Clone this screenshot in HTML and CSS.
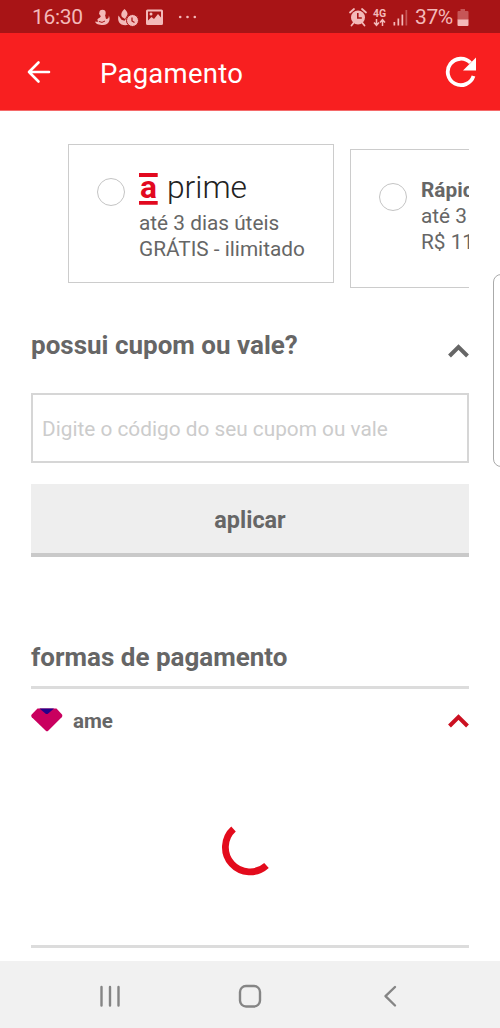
FILE: index.html
```html
<!DOCTYPE html>
<html lang="pt-BR">
<head>
<meta charset="utf-8">
<title>Pagamento</title>
<link rel="stylesheet" href="styles.css">
</head>
<body>
<div class="screen">
  <div class="status">
    <span class="time">16:30</span>
    <svg class="status-left" width="112" height="33" viewBox="90 0 112 33" fill="#f3b9b9">
      <circle cx="102.500" cy="12" r="3.200"/>
      <path d="M99 12.500l1.500-1.500 4.500 3 1 4c2 0 3-1 2.800-3.500 2 3.500.5 9.500-5.800 9.500-4 0-7.500-1-8-3.500 1.500.5 2.500.3 3.500-.3-1.500-.6-1.500-2-.3-2.700 1.500-.8 2.800-1.500 2.800-3.500z"/>
      <path d="M99 20.500q3 2 6-.5" fill="none" stroke="#a81416" stroke-width="1"/>
      <path d="M124.500 8c3 3 4 5 2 7.500l-1.500 2.500-3-2c-1.500-3-.5-5 2.500-8z"/>
      <path d="M118.500 14.500c-1 4 0 7.500 3 9 2 1 5 .9 7 .3l-1-8-3 4-3-1z"/>
      <circle cx="132.500" cy="19.500" r="6" stroke="#a81416" stroke-width="1"/>
      <path d="M132 16.500v3.500l2.500 1.500" fill="none" stroke="#a81416" stroke-width="1.300"/>
      <path fill-rule="evenodd" d="M147.500 8.500h14a1.500 1.500 0 0 1 1.500 1.500v12.500a1.500 1.500 0 0 1-1.500 1.500h-14a1.500 1.500 0 0 1-1.500-1.500V10a1.500 1.500 0 0 1 1.500-1.500zm.5 2v9l3.500-3.500 2.500 2 4-5 3 3.500v-6z"/>
      <circle cx="151" cy="13" r="1.500"/>
      <circle cx="180.200" cy="16" r="1.300"/><circle cx="187.500" cy="16" r="1.300"/><circle cx="194.800" cy="16" r="1.300"/>
    </svg>
    <svg class="status-right" width="62" height="33" viewBox="347 0 62 33" fill="#f3b9b9">
      <circle cx="358" cy="16.500" r="7"/>
      <path d="M350 11.500l4-3.500M366 11.500L362 8M353.500 22l-2 2.500M362.500 22l2 2.500" stroke="#f3b9b9" stroke-width="1.800" stroke-linecap="round"/>
      <path d="M357.800 12v5h4" fill="none" stroke="#a81416" stroke-width="1.600"/>
      <text class="net" x="373" y="15.700">4G</text>
      <path d="M376.500 18v6m-2.500-2.500l2.500 2.800 2.500-2.800M382.500 25v-6m-2.500 2.500l2.500-2.800 2.500 2.800" fill="none" stroke="#f3b9b9" stroke-width="1.500"/>
      <path d="M393.500 21h1.700v3.500h-1.700zM397.500 17.500h1.700v7h-1.700zM401.500 13.500h1.700v11h-1.700z"/>
      <path d="M405.500 9h1.700v15.500h-1.700z" opacity=".4"/>
    </svg>
    <span class="percent">37%</span>
    <svg class="battery" width="12" height="33" viewBox="0 0 12 33" fill="#f3b9b9">
      <path d="M3.500 8h4.500v2h2.500a1 1 0 0 1 1 1v8H.5v-8a1 1 0 0 1 1-1h2z" opacity=".4"/>
      <path d="M.5 18.500h11V24a1 1 0 0 1-1 1h-9a1 1 0 0 1-1-1z"/>
    </svg>
  </div>

  <header class="appbar">
    <svg class="back" width="24" height="24" viewBox="0 0 24 24"><path d="M22 12H2M11.500 2.500L2 12l9.500 9.500"/></svg>
    <h1 class="title">Pagamento</h1>
    <svg class="reload" width="32" height="32" viewBox="0 0 32 32"><path d="M28.500 20A13.200 13.200 0 1 1 25.500 6.800" fill="none" stroke="#fff" stroke-width="3.800"/><path d="M31 1.500v13H18z" fill="#fff"/></svg>
  </header>

  <main class="content">
    <section class="shipping">
      <div class="option">
        <span class="radio"></span>
        <div class="option-text">
          <svg class="prime-logo" width="112" height="38" viewBox="0 0 112 38">
            <path d="M0 1h18.700v4H0zM0 29h18.700v3.700H0z" fill="#e2091f"/>
            <text class="logo-a" x="1" y="25.500" textLength="17" lengthAdjust="spacingAndGlyphs">a</text>
            <text class="logo-prime" x="28" y="25.500" textLength="80" lengthAdjust="spacingAndGlyphs">prime</text>
          </svg>
          <p class="line">até 3 dias úteis</p>
          <p class="line">GRÁTIS - ilimitado</p>
        </div>
      </div>
      <div class="option option-next">
        <span class="radio"></span>
        <div class="option-text">
          <p class="line strong">Rápido</p>
          <p class="line">até 3 dias úteis</p>
          <p class="line">R$ 11,99</p>
        </div>
      </div>
    </section>

    <section class="coupon">
      <div class="coupon-head">
        <h2 class="heading">possui cupom ou vale?</h2>
        <svg class="chevron" width="21" height="14" viewBox="0 0 21 14"><path d="M1.500 12l9-9 9 9"/></svg>
      </div>
      <input class="code" type="text" placeholder="Digite o código do seu cupom ou vale">
      <button class="apply" type="button">aplicar</button>
    </section>

    <section class="payment">
      <h2 class="heading formas">formas de pagamento</h2>
      <div class="method">
        <svg width="32" height="24" viewBox="0 0 32 24"><path d="M6.500.5h19L31 6.500q.8 1.500-.3 2.700L17.200 22.700q-1.200 1-2.400 0L.8 9.200Q-.3 8 .7 6.500z" fill="#c9005f"/><path d="M8.500.5h14.500l-5.800 5q-1.400 1-2.800 0z" fill="#24008a"/></svg>
        <span class="method-name">ame</span>
        <svg class="chevron chevron-red" width="21" height="14" viewBox="0 0 21 14"><path d="M1.500 12l9-9 9 9"/></svg>
      </div>
      <div class="loading">
        <svg width="60" height="60" viewBox="0 0 60 60"><path d="M13.500 11A24.300 24.300 0 0 0 46.500 47.500" fill="none" stroke="#e30b1c" stroke-width="6.800"/></svg>
      </div>
    </section>
  </main>

  <nav class="navbar">
    <svg width="22" height="24" viewBox="0 0 22 24"><path d="M2.500 3v18.500M11 3v18.500M19.500 3v18.500"/></svg>
    <svg width="24" height="24" viewBox="0 0 24 24"><rect x="2" y="2" width="20" height="20.500" rx="6"/></svg>
    <svg width="22" height="24" viewBox="0 0 22 24"><path d="M16 3L6.500 12.200 16 21.500"/></svg>
  </nav>
  <div class="edge-handle"></div>
</div>
</body>
</html>
```
FILE: styles.css
```css
* { box-sizing: border-box; }
body { margin: 0; font-family: Roboto, sans-serif; color: #666; background: #fff; }
h1, h2, p { margin: 0; }
.screen { position: relative; width: 500px; height: 1028px; display: flex; flex-direction: column; overflow: hidden; }

.status { height: 33px; flex: none; background: #a81416; color: #f3b9b9; display: flex; align-items: center; font-size: 21px; line-height: 33px; padding: 1px 0 0 32px; }
.time { width: 58px; letter-spacing: -0.3px; }
.status-right { margin-left: 145px; }
.net { font: bold 10.5px Roboto, sans-serif; }
.percent { width: 42px; margin-left: 6px; letter-spacing: -0.4px; }
.battery { flex: none; }

.appbar { height: 78px; flex: none; background: #f81f20; color: #fff; display: flex; align-items: center; padding: 0 23px 0 27px; border-bottom: 1px solid #f56a6a; }
.back { fill: none; stroke: #fff; stroke-width: 2.6; stroke-linecap: round; stroke-linejoin: round; }
.title { margin-left: 49px; padding-top: 4px; font-size: 27.5px; letter-spacing: 0.25px; font-weight: 400; line-height: 32px; }
.reload { margin-left: auto; }

.content { flex: 1; padding: 33px 31px 0; display: flex; flex-direction: column; }
.shipping { height: 145px; flex: none; display: flex; gap: 16px; padding-left: 37px; overflow: hidden; }
.option { flex: none; width: 266px; height: 139px; border: 1px solid #ccc; display: flex; padding: 27px 0 0 28px; }
.option-next { margin-top: 5px; }
.radio { flex: none; width: 28px; height: 28px; margin-top: 6px; border: 1px solid #c4c4c4; border-radius: 50%; }
.option-text { margin-left: 14px; white-space: nowrap; }
.prime-logo { display: block; overflow: visible; }
.logo-a { font: bold 31px Roboto, sans-serif; fill: #e2091f; }
.logo-prime { font: 300 32px Roboto, sans-serif; fill: #222; }
.line { font-size: 20.8px; line-height: 26px; }
.strong { font-weight: 700; }

.coupon { display: flex; flex-direction: column; }
.coupon-head { display: flex; justify-content: space-between; padding-top: 41px; height: 104px; }
.heading { font-size: 26px; line-height: 30px; font-weight: 700; white-space: nowrap; }
.chevron { margin-top: 14px; fill: none; stroke: #666; stroke-width: 4; }
.code { height: 70px; border: 2px solid #d6d6d6; padding: 1px 9px 0; font: 20.8px Roboto, sans-serif; border-radius: 0; background: #fff; outline: none; }
.code::placeholder { color: #ccc; opacity: 1; }
.apply { height: 73px; margin-top: 21px; border: 0; border-bottom: 4px solid #c9c9c9; background: #eee; color: #666; font: bold 23.4px Roboto, sans-serif; padding: 2px 0 0; }

.payment { padding-top: 85px; display: flex; flex-direction: column; }
.formas { height: 47px; border-bottom: 3px solid #dcdcdc; }
.method { height: 65px; display: flex; align-items: center; padding-bottom: 3px; }
.method-name { margin-left: 10px; padding-top: 2px; font-size: 20.6px; font-weight: 700; }
.chevron-red { margin: 2px 0 0 auto; stroke: #cb1021; }
.loading { height: 194px; display: flex; justify-content: center; padding-top: 64px; border-bottom: 3px solid #dcdcdc; }

.navbar { height: 67px; flex: none; background: #f1f1f1; display: flex; align-items: center; justify-content: space-between; padding: 2px 99px 0 99px; }
.navbar svg { fill: none; stroke: #858585; stroke-width: 2.4; stroke-linecap: round; stroke-linejoin: round; }
.edge-handle { position: absolute; left: 493px; top: 274px; width: 20px; height: 193px; border: 1px solid #aaa; border-radius: 8px; background: #fff; }
```
